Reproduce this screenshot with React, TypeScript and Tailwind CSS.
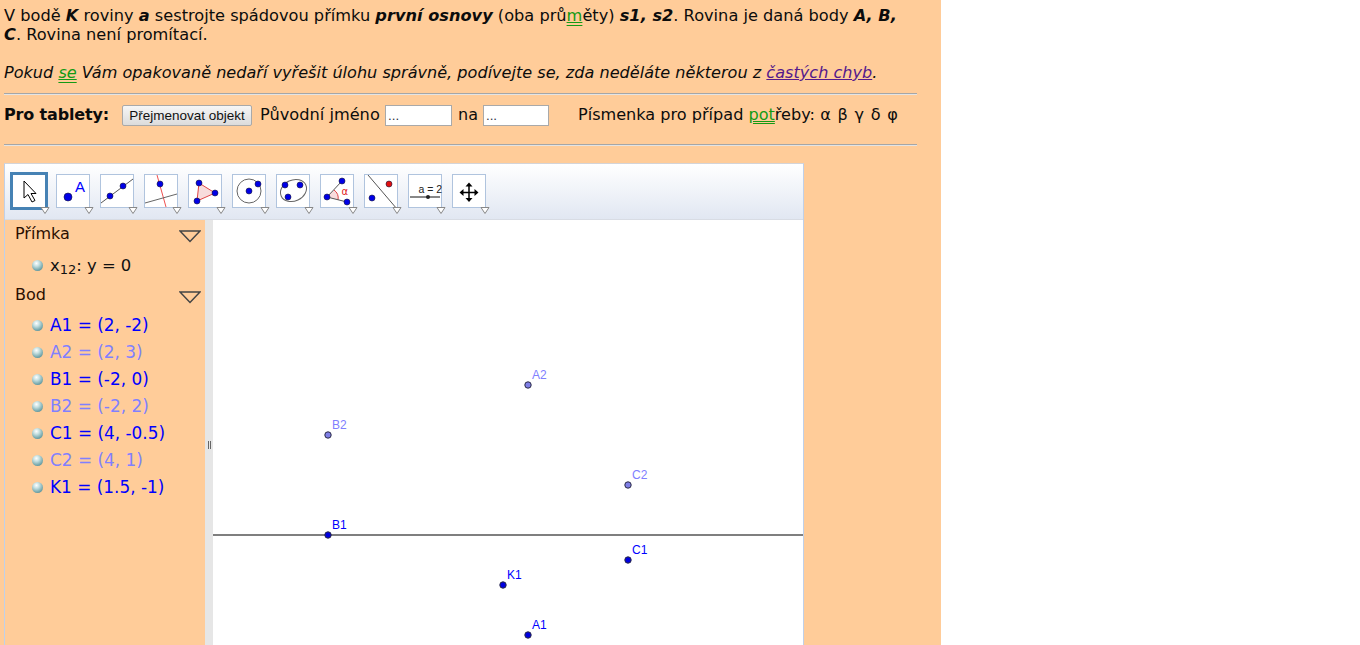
const font = "[font-family:'DejaVu_Sans',Verdana,sans-serif]";
const hint = "text-[#149a14] underline decoration-double decoration-[#149a14]";
const rule = "w-[913px] h-[2px] border-t border-b border-t-[#a6a6a6] border-b-[#e4e4e4]";
const formFont = "font-['Liberation_Sans',Arial,sans-serif]";

function Tool({ children, active }: { children: React.ReactNode; active?: boolean }) {
  return (
    <div className="relative w-[44px] h-[38px] shrink-0">
      <div
        className={
          active
            ? "absolute left-0 top-0 w-[38px] h-[38px] border-[3px] border-[#4682b4] bg-white"
            : "absolute left-[2px] top-[2px] w-[34px] h-[34px] border border-[#b0c4de] bg-white"
        }
      >
        <svg viewBox="0 0 32 32" className="w-full h-full block overflow-visible">
          {children}
        </svg>
      </div>
      <svg viewBox="0 0 10 7" className="absolute left-[30px] top-[35px] w-[10px] h-[7px]">
        <path d="M1 0.500H9L5 6.500Z" fill="#fff" stroke="#888" strokeWidth="1" />
      </svg>
    </div>
  );
}

function Dot({ x, y, r = 3, fill = "#0000e6" }: { x: number; y: number; r?: number; fill?: string }) {
  return <circle cx={x} cy={y} r={r} fill={fill} stroke="#15153a" strokeWidth="0.6" />;
}

const tools = [
  <g key="point">
    <Dot x={11} y={22} r={4} />
    <text x="18" y="17" fontSize="15" fill="#0000ff" fontFamily="'Liberation Sans'">
      A
    </text>
  </g>,
  <g key="line">
    <line x1="0" y1="28" x2="32" y2="4" stroke="#555" strokeWidth="1" />
    <Dot x={9} y={21} />
    <Dot x={22} y={11} />
  </g>,
  <g key="perp">
    <line x1="12" y1="0" x2="21" y2="32" stroke="#ef5050" strokeWidth="1" />
    <line x1="0" y1="28" x2="32" y2="19" stroke="#666" strokeWidth="1" />
    <Dot x={15} y={9} />
  </g>,
  <g key="polygon">
    <path d="M10 8L26 18L8 26Z" fill="#f8dcdc" stroke="#e04545" strokeWidth="1" />
    <Dot x={10} y={8} />
    <Dot x={26} y={18} />
    <Dot x={8} y={26} />
  </g>,
  <g key="circle">
    <circle cx="16" cy="16" r="12" fill="none" stroke="#666" strokeWidth="1" />
    <Dot x={16} y={16} />
    <Dot x={25} y={9} />
  </g>,
  <g key="conic">
    <ellipse cx="16.500" cy="15.500" rx="13.500" ry="10.500" transform="rotate(-25 16.500 15.500)" fill="none" stroke="#666" strokeWidth="1" />
    <Dot x={8} y={10} />
    <Dot x={23} y={10} />
    <Dot x={11} y={22} />
  </g>,
  <g key="angle">
    <path d="M6 22L13 15A10 10 0 0 1 17 25Z" fill="#f8dcdc" />
    <path d="M13 15A10 10 0 0 1 17 25" fill="none" stroke="#e04545" strokeWidth="1" />
    <path d="M21 6L6 22L26 27" fill="none" stroke="#555" strokeWidth="1" />
    <Dot x={21} y={6} />
    <Dot x={6} y={22} />
    <Dot x={26} y={27} />
    <text x="20.500" y="20" fontSize="10" fill="#e02020" fontFamily="'DejaVu Sans'">
      α
    </text>
  </g>,
  <g key="parallel">
    <line x1="3" y1="0" x2="32" y2="34" stroke="#555" strokeWidth="1" />
    <Dot x={24} y={9} fill="#e01010" />
    <Dot x={7} y={23} />
  </g>,
  <g key="slider">
    <text x="9.500" y="18" fontSize="10.500" fill="#222" fontFamily="'Liberation Sans'">
      a = 2
    </text>
    <line x1="1" y1="22" x2="31" y2="22" stroke="#111" strokeWidth="1" />
    <circle cx="19" cy="22" r="2" fill="#222" />
  </g>,
  <g key="move">
    <path d="M16 10V25M8 17.500H24" stroke="#000" strokeWidth="1.500" />
    <path d="M16 7.500L19.500 11.500H12.500ZM16 27L19.500 23H12.500ZM6.500 17.500L10.500 14V21ZM25.500 17.500L21.500 14V21Z" fill="#000" />
  </g>,
];

const items = [
  { label: "A1 = (2, -2)", color: "text-[#0000ff]" },
  { label: "A2 = (2, 3)", color: "text-[#8080ff]" },
  { label: "B1 = (-2, 0)", color: "text-[#0000ff]" },
  { label: "B2 = (-2, 2)", color: "text-[#8080ff]" },
  { label: "C1 = (4, -0.5)", color: "text-[#0000ff]" },
  { label: "C2 = (4, 1)", color: "text-[#8080ff]" },
  { label: "K1 = (1.5, -1)", color: "text-[#0000ff]" },
];

const points = [
  { name: "A2", x: 315, y: 165, light: true },
  { name: "B2", x: 115, y: 215, light: true },
  { name: "C2", x: 415, y: 265, light: true },
  { name: "B1", x: 115, y: 315 },
  { name: "C1", x: 415, y: 340 },
  { name: "K1", x: 290, y: 365 },
  { name: "A1", x: 315, y: 415 },
];

function Ball() {
  return (
    <span className="w-[11px] h-[11px] rounded-full shrink-0 bg-[radial-gradient(circle_at_40%_30%,#ffffff_0%,#c4dfe0_30%,#6fa3a8_70%,#3f7080_100%)]" />
  );
}

function GroupHead({ title, className }: { title: string; className?: string }) {
  return (
    <div className={`flex items-center justify-between h-[26px] pl-[10px] pr-[4px] text-[#2b0f00] ${className ?? ""}`}>
      <span>{title}</span>
      <svg viewBox="0 0 22 13" className="w-[22px] h-[13px] mt-[6px]">
        <path d="M1 1H21L11 11.500Z" fill="none" stroke="#444" strokeWidth="1.500" />
      </svg>
    </div>
  );
}

function Row({ children, className }: { children: React.ReactNode; className?: string }) {
  return <div className={`flex items-center gap-[7px] h-[27px] pl-[27px] ${className ?? ""}`}>{children}</div>;
}

export default function App() {
  return (
    <div className="h-[645px] overflow-hidden bg-white">
      <div className={`w-[941px] h-[645px] overflow-hidden bg-[#ffcc99] pl-[4px] pt-[6px] text-[16px] leading-[19px] text-[#0c0c0c] ${font}`}>
        <p className="w-[905px] text-[16.200px]">
          V bodě <b><i>K</i></b> roviny <b><i>a</i></b> sestrojte spádovou přímku <b><i>první osnovy</i></b> (oba prů
          <span className={hint}>m</span>ěty) <b><i>s1, s2</i></b>. Rovina je daná body <b><i>A, B, C</i></b>. Rovina není promítací.
        </p>
        <p className="w-[913px] mt-[19px] italic text-[16.100px]">
          Pokud <span className={hint}>se</span> Vám opakovaně nedaří vyřešit úlohu správně, podívejte se, zda neděláte některou z{" "}
          <a href="#" className="text-[#551a8b] underline">častých chyb</a>.
        </p>
        <hr className={`${rule} mt-[11px]`} />
        <div className="flex items-center h-[38px]">
          <b className="mr-[13px] w-[105px] whitespace-nowrap tracking-[-0.15px]">Pro tablety:</b>
          <button className={`h-[21px] w-[130px] mt-[3px] border border-[#a9a9a9] rounded-[2px] bg-gradient-to-b from-[#f6f6f6] to-[#dcdcdc] text-[13.500px] leading-none text-[#111] ${formFont}`}>
            Přejmenovat objekt
          </button>
          <span className="ml-[8px] w-[120px] whitespace-nowrap text-[16.200px]">Původní jméno</span>
          <input
            defaultValue="..."
            className={`ml-[5px] mt-[3px] w-[67px] h-[21px] border border-[#a9a9a9] bg-white px-[2px] text-[13.300px] text-[#334] ${formFont}`}
          />
          <span className="ml-[6px]">na</span>
          <input
            defaultValue="..."
            className={`ml-[5px] mt-[3px] w-[66px] h-[21px] border border-[#a9a9a9] bg-white px-[2px] text-[13.300px] text-[#334] ${formFont}`}
          />
          <span className="ml-[29px] text-[16.100px]">
            Písmenka pro případ <span className={hint}>pot</span>řeby: <span className="tracking-[0.8px]">α β γ δ φ</span>
          </span>
        </div>
        <hr className={`${rule} mt-[11px]`} />
        <div className="w-[800px] mt-[17px] border border-[#c0d0e8] border-t-[#d4d4d8]">
          <div className="flex items-start h-[56px] pl-[5px] pt-[8px] border-b border-b-[#d8dce4] bg-gradient-to-b from-white to-[#e1e7f2]">
            <Tool active>
              <path d="M11 6V23L15 19.500L19 27L22 25.500L18 18.500H23Z" fill="#fff" stroke="#000" strokeWidth="1" />
            </Tool>
            {tools.map((t, i) => (
              <Tool key={i}>{t}</Tool>
            ))}
          </div>
          <div className="flex h-[500px]">
            <div className="w-[200px] shrink-0 bg-[#ffcc99]">
              <GroupHead title="Přímka" className="mb-[6px]" />
              <Row className="text-[16.400px]">
                <Ball />
                <span className="text-[#111]">
                  x<sub className="text-[13px]">12</sub>: y = 0
                </span>
              </Row>
              <GroupHead title="Bod" className="mt-[2px] mb-[5px]" />
              {items.map((item) => (
                <Row key={item.label} className={`text-[16.900px] ${item.color}`}>
                  <Ball />
                  <span>{item.label}</span>
                </Row>
              ))}
            </div>
            <div className="w-[8px] shrink-0 bg-[#e6e6e6] flex flex-col items-center pt-[221px]">
              <span className="w-[3px] h-[8px] border-x border-[#666]" />
            </div>
            <svg className="flex-1 h-full bg-white block">
              <line x1="0" y1="315" x2="590" y2="315" stroke="#7f7f7f" strokeWidth="2" />
              {points.map((p) => (
                <g key={p.name}>
                  <circle
                    cx={p.x}
                    cy={p.y}
                    r="3.200"
                    fill={p.light ? "#7f7fe6" : "#0000e0"}
                    stroke="#2a2a44"
                    strokeWidth="1"
                  />
                  <text
                    x={p.x + 4}
                    y={p.y - 6}
                    fontSize="12"
                    fill={p.light ? "#8080ff" : "#0000ff"}
                    fontFamily="'Liberation Sans', Arial, sans-serif"
                  >
                    {p.name}
                  </text>
                </g>
              ))}
            </svg>
          </div>
        </div>
      </div>
    </div>
  );
}
